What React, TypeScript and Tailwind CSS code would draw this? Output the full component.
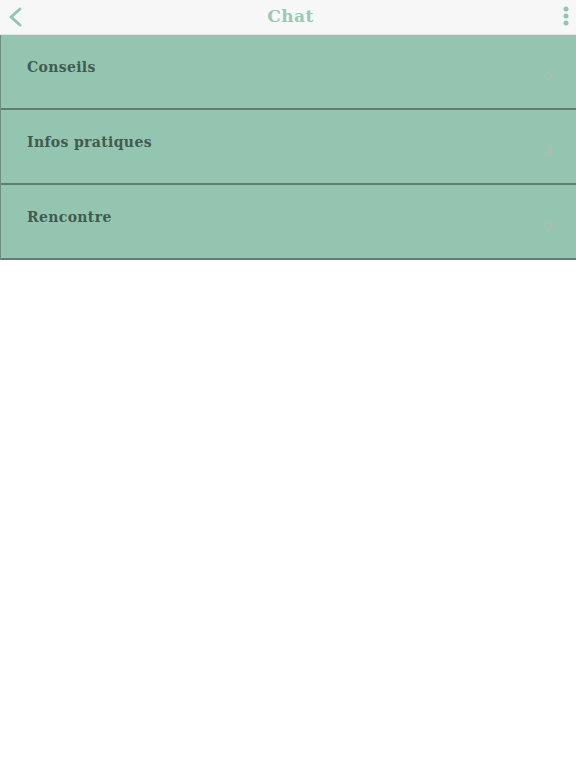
const items = ["Conseils", "Infos pratiques", "Rencontre"];

const App = () => {
  return (
    <div className="min-h-screen w-[576px] bg-white" style={{ fontFamily: '"DejaVu Serif", "Liberation Serif", serif' }}>
      <header className="h-[35px] bg-[#f7f7f7] flex items-center justify-between px-[6px] border-b border-[#e4e4e4]">
        <svg width="16" height="22" viewBox="0 0 16 22" className="ml-[1px]">
          <path d="M13 3 L4 11 L13 19" fill="none" stroke="#94c5b0" strokeWidth="3" strokeLinecap="round" strokeLinejoin="round" />
        </svg>
        <h1 className="text-[17px] text-[#9cc8b6] font-semibold tracking-wide pr-[4px]">Chat</h1>
        <svg width="8" height="24" viewBox="0 0 8 24">
          <circle cx="4" cy="4" r="2.5" fill="#94c5b0" />
          <circle cx="4" cy="11" r="2.5" fill="#94c5b0" />
          <circle cx="4" cy="18" r="2.5" fill="#94c5b0" />
        </svg>
      </header>
      <ul className="border-l border-[#6e8e80]">
        {items.map((item) => (
          <li key={item} className="h-[75px] bg-[#94c5b0] border-b-2 border-[#5f7d70] flex justify-between pl-[26px] pr-[20px]">
            <span className="pt-[22px] text-[14px] font-semibold text-[#435a51] tracking-wide">{item}</span>
            <svg width="12" height="14" viewBox="0 0 12 14" className="mt-[34px]">
              <path d="M3 2 L9 7 L3 12" fill="none" stroke="#b3b9b1" strokeWidth="2" />
            </svg>
          </li>
        ))}
      </ul>
    </div>
  );
};

export default App;
